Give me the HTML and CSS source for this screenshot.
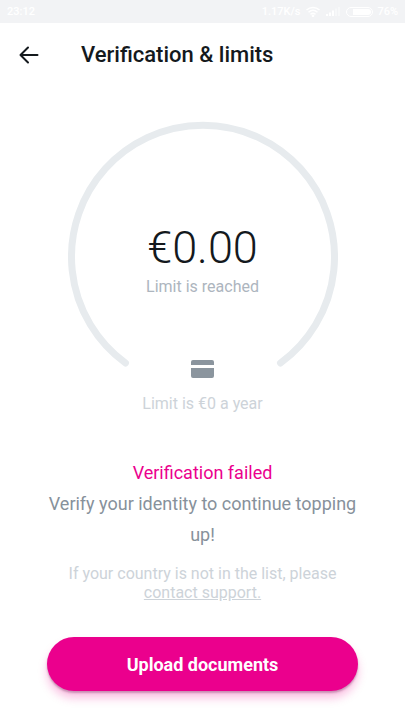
FILE: index.html
```html
<!DOCTYPE html>
<html lang="en">
<head>
<meta charset="utf-8">
<meta name="viewport" content="width=device-width, initial-scale=1">
<title>Verification &amp; limits</title>
<link rel="stylesheet" href="styles.css">
</head>
<body>
<div class="status">
  <span>23:12</span>
  <div class="status-right">
    <span>1.17K/s</span>
    <svg width="14" height="11" viewBox="0 0 14 11" fill="none" stroke="currentColor" stroke-width="1.5" aria-hidden="true"><path d="M.5 4C4.300.5 9.700.5 13.500 4M2.500 6.200c2.700-2.300 6.300-2.300 9 0M4.500 8.300c1.600-1.300 3.400-1.300 5 0"/><circle cx="7" cy="9.800" r=".6"/></svg>
    <svg width="14" height="9" viewBox="0 0 14 9" fill="currentColor" aria-hidden="true"><path d="M0 7h2v2H0zM3 5.500h2V9H3zM6 3.500h2V9H6z"/><path opacity=".4" d="M9 1.500h2V9H9zM12 0h2v9h-2z"/></svg>
    <div class="battery">
      <svg width="27" height="10" viewBox="0 0 27 10" aria-hidden="true"><rect x=".5" y=".5" width="26" height="9" rx="4.500" fill="none" stroke="currentColor"/><path d="M7 2h15a3 3 0 0 1 0 6H7z" fill="currentColor"/></svg>
      <span>76%</span>
    </div>
  </div>
</div>
<header class="bar">
  <button class="back" aria-label="Back">
    <svg width="20" height="18" viewBox="0 0 20 18" fill="none" stroke="currentColor" stroke-width="2" stroke-linecap="round" stroke-linejoin="round" aria-hidden="true"><path d="M18.500 9H1.500M9 1.500 1.500 9 9 16.500"/></svg>
  </button>
  <h1>Verification &amp; limits</h1>
</header>
<main>
  <section class="gauge">
    <svg class="arc" viewBox="0 0 270 270" fill="none" aria-hidden="true"><path d="M57.500 242A131.500 131.500 0 1 1 212.500 242" stroke="#e7ebee" stroke-width="7" stroke-linecap="round"/></svg>
    <div class="reading">
      <p class="amount">€0.00</p>
      <p class="reached">Limit is reached</p>
    </div>
    <div class="yearly">
      <svg width="23" height="18" viewBox="0 0 23 18" fill="#8b959e" aria-hidden="true"><path d="M2 0h19a2 2 0 0 1 2 2v3H0V2a2 2 0 0 1 2-2zM0 8h23v8a2 2 0 0 1-2 2H2a2 2 0 0 1-2-2z"/></svg>
      <p>Limit is €0 a year</p>
    </div>
  </section>
  <section class="message">
    <h2>Verification failed</h2>
    <p class="lead">Verify your identity to continue topping up!</p>
    <p class="note">If your country is not in the list, please <a href="#support">contact support.</a></p>
  </section>
  <button class="upload">Upload documents</button>
</main>
</body>
</html>
```
FILE: styles.css
```css
* {
  box-sizing: border-box;
}

body {
  margin: 0;
  background: #fff;
  color: #14191d;
  font-family: Roboto, "Liberation Sans", sans-serif;
}

h1, h2, p {
  margin: 0;
}

button {
  border: 0;
  font: inherit;
}

.status {
  display: flex;
  justify-content: space-between;
  align-items: center;
  height: 23px;
  padding: 0 7px;
  background: #f2f3f5;
  color: #fff;
  font-size: 11px;
  font-weight: 500;
}

.status-right {
  display: flex;
  align-items: center;
  gap: 6px;
}

.battery {
  display: flex;
  align-items: center;
  gap: 4px;
}

.bar {
  display: flex;
  align-items: center;
  gap: 42px;
  height: 63px;
  padding: 0 19px;
}

.back {
  display: flex;
  padding: 0;
  background: none;
  color: inherit;
}

h1 {
  font-size: 22px;
  line-height: 28px;
  font-weight: 500;
}

main {
  display: flex;
  flex-direction: column;
  align-items: center;
  padding: 35px 47px 28px;
}

.gauge {
  display: grid;
  justify-items: center;
  width: 100%;
  max-width: 270px;
  text-align: center;
}

.arc,
.reading,
.yearly {
  grid-area: 1 / 1;
}

.arc {
  width: 100%;
}

.reading {
  padding-top: 100px;
}

.amount {
  font-size: 45px;
  line-height: 54px;
  font-weight: 300;
}

.reached,
.yearly {
  font-size: 16px;
  line-height: 20px;
  color: #adb5be;
}

.reached {
  margin-top: 2px;
}

.yearly {
  display: flex;
  flex-direction: column;
  align-items: center;
  gap: 16px;
  padding-top: 239px;
  color: #cdd3d9;
}

.message {
  margin-top: 43px;
  text-align: center;
}

h2,
.lead {
  font-size: 18px;
  line-height: 31px;
  font-weight: 400;
}

h2 {
  color: #eb008d;
}

.lead {
  color: #87919b;
}

.note {
  margin: 14px 20px 0;
  font-size: 16px;
  line-height: 19px;
  color: #cdd3d9;
}

.note a {
  color: inherit;
}

.upload {
  width: 100%;
  height: 54px;
  margin-top: 35px;
  border-radius: 27px;
  background: #eb008d;
  color: #fff;
  font-size: 18px;
  font-weight: 700;
  box-shadow: 0 2px 2px rgba(90, 20, 70, 0.3), 0 7px 10px rgba(235, 0, 141, 0.25);
}
```
